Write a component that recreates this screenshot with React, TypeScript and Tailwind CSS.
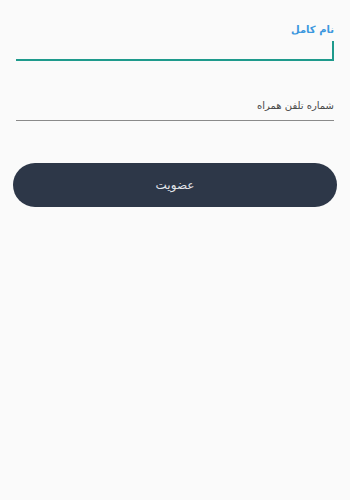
import React from "react";

export default function App() {
  return (
    <div
      dir="rtl"
      className="min-h-[500px] w-full bg-[#fafafa] px-[13px] pt-[22px]"
      style={{ fontFamily: '"DejaVu Sans", "Noto Sans", sans-serif' }}
    >
      <div className="mx-[3px]">
        <div className="text-[10px] font-bold leading-[16px] text-[#3b97de]">نام کامل</div>
        <div className="mt-[2px] flex h-[21px] items-center border-b-2 border-[#1e9a8c]">
          <div className="h-[18px] w-[2px] bg-[#1e9a8c]" />
        </div>
      </div>

      <div className="mx-[3px] mt-[37px]">
        <div className="text-[10px] leading-[16px] text-[#4a4a4a]">شماره تلفن همراه</div>
        <div className="mt-[6px] h-[1px] bg-[#8a8a8a]" />
      </div>

      <button className="mt-[42px] flex h-[44px] w-full items-center justify-center rounded-full bg-[#2d3748] text-[12px] text-[#e2e5ea]">
        عضویت
      </button>
    </div>
  );
}
